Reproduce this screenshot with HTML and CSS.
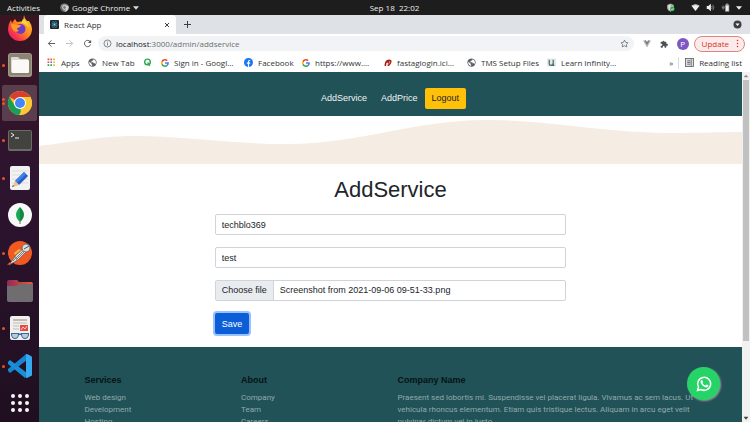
FILE: index.html
```html
<!DOCTYPE html>
<html lang="en">
<head>
<meta charset="utf-8">
<meta name="viewport" content="width=device-width, initial-scale=1">
<title>React App</title>
<link rel="stylesheet" href="styles.css">
</head>
<body>
<svg class="defs" aria-hidden="true">
  <symbol id="globe" viewBox="0 0 24 24">
    <circle cx="12" cy="12" r="11" fill="#5f6368"/>
    <path d="M3 10l6 4v2l2 2v3C6 21 3 16 3 10zM9 3l6 0-1 3-3 1v2H8v2h6l1 3h3l2 2c3-4 1-11-5-13z" fill="#fff"/>
  </symbol>
  <symbol id="google" viewBox="0 0 48 48">
    <path fill="#ea4335" d="M24 9.5c3.5 0 6.700 1.200 9.200 3.600l6.900-6.900C35.900 2.400 30.500 0 24 0 14.600 0 6.500 5.400 2.600 13.200l8 6.200C12.400 13.700 17.700 9.500 24 9.500z"/>
    <path fill="#4285f4" d="M47 24.600c0-1.600-.2-3.100-.4-4.600H24v9h12.900c-.6 3-2.200 5.500-4.700 7.200l7.700 6C44.400 38 47 32 47 24.600z"/>
    <path fill="#fbbc05" d="M10.500 28.600a14.500 14.500 0 0 1 0-9.200l-8-6.200a24 24 0 0 0 0 21.600z"/>
    <path fill="#34a853" d="M24 48c6.500 0 12-2.100 15.900-5.800l-7.700-6c-2.200 1.500-4.900 2.300-8.200 2.300-6.300 0-11.600-4.200-13.500-9.900l-8 6.200C6.500 42.600 14.600 48 24 48z"/>
  </symbol>
</svg>

<header class="topbar">
  <div class="topbar-left">
    <button>Activities</button>
    <button class="app-menu">
      <svg class="i9" viewBox="0 0 24 24"><circle cx="12" cy="12" r="11" fill="#8b8b8b"/><path d="M12 7h10A11 11 0 0 1 12 23l5-8" fill="#d2d2d2"/><path d="M7 15L2 7a11 11 0 0 0 9 16" fill="#666"/><circle cx="12" cy="12" r="5" fill="#777" stroke="#eee" stroke-width="2"/></svg>
      Google Chrome
      <svg class="i6" viewBox="0 0 10 10"><path d="M0 2h10L5 8z" fill="#ddd"/></svg>
    </button>
  </div>
  <time>Sep 18&nbsp; 22:02</time>
  <div class="tray">
    <svg class="i9 shield" viewBox="0 0 24 24"><path d="M12 1l9 4v7c0 6-4 9-9 11-5-2-9-5-9-11V5z" fill="#aaa"/><path d="M12 4v16c-4-2-6-4-6-8V6z" fill="#ddd"/><circle cx="17" cy="16" r="6" fill="#25b543"/><path d="M14 16l2 2 4-4" stroke="#fff" stroke-width="2" fill="none"/></svg>
    <svg class="i9" viewBox="0 0 24 24"><path d="M1 7q11-8 22 0L12 21z" fill="#eee"/><path d="M3 8q9-6 18 0" stroke="#888" fill="none"/></svg>
    <svg class="i9" viewBox="0 0 24 24"><path d="M2 8h4l7-6v20l-7-6H2z" fill="#eee"/><path d="M15 8q3 4 0 8M18 5q6 7 0 14" stroke="#999" stroke-width="2" fill="none"/></svg>
    <svg class="i9" viewBox="0 0 24 24"><path d="M11 4h3V1h5v3h3v19H11z" fill="#999"/><path d="M13 7h7v14h-7z" fill="#eee"/><path d="M6 6v4M3 10h6v4H3zM6 14v5" stroke="#777" stroke-width="2" fill="#777"/></svg>
    <svg class="i6" viewBox="0 0 10 10"><path d="M0 2h10L5 8z" fill="#eee"/></svg>
  </div>
</header>

<div class="desktop">
  <nav class="dock" aria-label="Dock">
    <button class="dock-item" aria-label="Firefox">
      <svg viewBox="0 0 26 26"><defs><linearGradient id="fx" x1="1" y1="0" x2="0" y2="1"><stop offset="0" stop-color="#ffe23a"/><stop offset=".45" stop-color="#ff8a1f"/><stop offset=".75" stop-color="#f8334d"/><stop offset="1" stop-color="#d9128c"/></linearGradient></defs><path d="M17 0q0 3 3 6l2 0q3 4 3 8a12 12 0 0 1-24 0Q1 9 4 5l1 3 3-4 2 3q4-1 6 0z" fill="url(#fx)"/><circle cx="13.500" cy="14" r="5" fill="#6c3bc9"/><path d="M4 9q4 0 6 1h4q-1 3-4 3 0 2 2 3-4 2-6-1-2-3-2-6z" fill="#ff9a22"/><path d="M16 4q5 3 6 9-4-5-8-5z" fill="#ffd33b"/></svg>
    </button>
    <button class="dock-item running" aria-label="Files">
      <svg viewBox="0 0 26 26"><rect x="1" y="1" width="24" height="24" rx="3" fill="#a09a88"/><rect x="2" y="2" width="22" height="21" rx="2" fill="#8b8473"/><path d="M4 6q0-1 1-1h6l2 2h8v13q0 1-1 1H6q-2 0-2-2z" fill="#ddd8cf"/><rect x="5" y="8" width="17" height="13" rx="1" fill="#faf9f7"/></svg>
    </button>
    <button class="dock-item running twice active" aria-label="Google Chrome">
      <svg viewBox="0 0 26 26"><circle cx="13" cy="13" r="12" fill="#fcc934"/><path d="M13 13L2.600 7a12 12 0 0 1 20.800 0z" fill="#d93f30"/><path d="M13 13l1 12A12 12 0 0 1 2.600 7L8 16z" fill="#1e9e55"/><path d="M18 15l-6 10h2a12 12 0 0 0 9.400-18H13z" fill="#fcc934"/><circle cx="13" cy="13" r="6" fill="#fff"/><circle cx="13" cy="13" r="5" fill="#4386f5"/></svg>
    </button>
    <button class="dock-item running" aria-label="Terminal">
      <svg viewBox="0 0 26 26"><rect x="1" y="3" width="24" height="21" rx="2" fill="#6a6a66"/><rect x="2" y="4" width="22" height="18" rx="1" fill="#42423f"/><path d="M4 6l3 2-3 2M8 11h4" stroke="#eee" fill="none"/></svg>
    </button>
    <button class="dock-item running" aria-label="Text Editor">
      <svg viewBox="0 0 26 26"><rect x="3" y="1" width="20" height="24" rx="2" fill="#f2f2f2"/><path d="M5 6h16M5 10h16M5 14h16M5 18h16" stroke="#ddd"/><path d="M17 7l4 4-9 9-4-4z" fill="#245dcc"/><path d="M17 7l2 2-9 9-2-2z" fill="#4582e8"/><path d="M8 16l4 4-6 2z" fill="#efc28c"/><path d="M6 20l1 1-2 1z" fill="#222"/></svg>
    </button>
    <button class="dock-item" aria-label="MongoDB Compass">
      <svg viewBox="0 0 26 26"><circle cx="13" cy="13" r="12" fill="#f8f8f8"/><path d="M13 5q-8 8 0 15z" fill="#17a851"/><path d="M13 5q8 8 0 15z" fill="#118743"/><path d="M13 18v4" stroke="#777"/></svg>
    </button>
    <button class="dock-item running" aria-label="Postman">
      <svg viewBox="0 0 26 26"><circle cx="13" cy="13" r="12" fill="#f05a22"/><path d="M2 25l7-10 8-7 3 3-9 9z" fill="#e6ded6" stroke="#555" stroke-width=".7"/><path d="M6 21L17 10M9 20l9-9M7 16l4 3" stroke="#666" stroke-width=".8"/><circle cx="19" cy="8" r="4" fill="#ddd" stroke="#555" stroke-width=".7"/><path d="M17 9l5-3" stroke="#555"/><path d="M7 13l5-4 2 1-6 5z" fill="#f7b33f"/><path d="M0 25l3-3 1 2z" fill="#ff5c2e"/></svg>
    </button>
    <button class="dock-item" aria-label="Folder">
      <svg viewBox="0 0 26 26"><defs><linearGradient id="fd"><stop offset="0" stop-color="#8e2959"/><stop offset="1" stop-color="#eb5d35"/></linearGradient></defs><path d="M0 4q0-2 2-2h8l2 2h12q2 0 2 2v6H0z" fill="url(#fd)"/><path d="M0 8h10l2-2h14v16q0 2-2 2H2q-2 0-2-2z" fill="#6f6d6f"/></svg>
    </button>
    <button class="dock-item running" aria-label="Document Viewer">
      <svg viewBox="0 0 26 26"><rect x="3" y="1" width="20" height="24" rx="2" fill="#f2f0ed"/><path d="M6 5h14" stroke="#888"/><path d="M6 8h14M6 11h6M6 14h6" stroke="#bbb"/><rect x="13" y="10" width="8" height="6" fill="#e14b44"/><path d="M14 15l2-3 2 2 2-3" stroke="#fff" stroke-width=".7" fill="none"/><path d="M4 18h8l1 1 1-1h8v2q-1 4-4 4t-4-4h-2q-1 4-4 4t-4-4z" fill="#2f69a8"/><path d="M5 19h6q0 4-3 4t-3-4zM15 19h6q0 4-3 4t-3-4z" fill="#bdcbd7"/></svg>
    </button>
    <button class="dock-item running" aria-label="Visual Studio Code">
      <svg viewBox="0 0 26 26"><path d="M18 2L1 16v2l2 2L20 7z" fill="#1684d0"/><path d="M1 9l2-2 17 13-2 5L1 11z" fill="#198ed9"/><path d="M18 2q1-1 2-1l4 2q1 0 1 2v17q0 1-1 1l-4 2q-1 0-2-1 1 0 1-2V4z" fill="#35a9ef"/></svg>
    </button>
    <button class="dock-item" aria-label="Show Applications">
      <svg viewBox="0 0 26 26" fill="#f5f5f5"><circle cx="6" cy="6" r="2"/><circle cx="13" cy="6" r="2"/><circle cx="20" cy="6" r="2"/><circle cx="6" cy="13" r="2"/><circle cx="13" cy="13" r="2"/><circle cx="20" cy="13" r="2"/><circle cx="6" cy="20" r="2"/><circle cx="13" cy="20" r="2"/><circle cx="20" cy="20" r="2"/></svg>
    </button>
  </nav>

  <div class="window">
    <div class="tabstrip">
      <div class="tab">
        <svg class="i9" viewBox="0 0 20 20"><rect width="20" height="20" rx="2" fill="#20232a"/><g fill="none" stroke="#48a0b5"><ellipse cx="10" cy="10" rx="8" ry="3"/><ellipse cx="10" cy="10" rx="8" ry="3" transform="rotate(60 10 10)"/><ellipse cx="10" cy="10" rx="8" ry="3" transform="rotate(120 10 10)"/></g><circle cx="10" cy="10" r="2" fill="#61dafb"/></svg>
        <span class="tab-title">React App</span>
        <button class="icon-btn" aria-label="Close tab"><svg class="i6" viewBox="0 0 12 12"><path d="M2 2l8 8M10 2l-8 8" stroke="#3c4043" stroke-width="2"/></svg></button>
      </div>
      <button class="icon-btn" aria-label="New tab"><svg class="i9" viewBox="0 0 18 18"><path d="M9 2v14M2 9h14" stroke="#3c4043" stroke-width="2"/></svg></button>
      <button class="icon-btn tab-search" aria-label="Search tabs"><svg class="i9" viewBox="0 0 18 18"><circle cx="9" cy="9" r="8" fill="#3c4043"/><path d="M5 7h8l-4 5z" fill="#fff"/></svg></button>
    </div>

    <div class="toolbar">
      <button class="icon-btn" aria-label="Back"><svg class="i9" viewBox="0 0 20 20"><path d="M18 10H3M10 3l-7 7 7 7" stroke="#4d5156" stroke-width="2" fill="none"/></svg></button>
      <button class="icon-btn" aria-label="Forward"><svg class="i9" viewBox="0 0 20 20"><path d="M2 10h15M10 3l7 7-7 7" stroke="#babcbe" stroke-width="2" fill="none"/></svg></button>
      <button class="icon-btn" aria-label="Reload"><svg class="i9" viewBox="0 0 20 20"><path d="M16 6a7 7 0 1 0 1 6" stroke="#4d5156" stroke-width="2" fill="none"/><path d="M18 2v7h-7z" fill="#4d5156"/></svg></button>
      <div class="omnibox">
        <svg class="i9" viewBox="0 0 18 18"><circle cx="9" cy="9" r="7" fill="none" stroke="#5f6368" stroke-width="1.500"/><path d="M9 8v5M9 5v2" stroke="#5f6368" stroke-width="1.500"/></svg>
        <a class="url" href="#"><b>localhost</b>:3000/admin/addservice</a>
        <button class="icon-btn" aria-label="Bookmark this page"><svg class="i9" viewBox="0 0 24 24"><path d="M12 3l3 6 6 1-4 5 1 6-6-3-6 3 1-6-4-5 6-1z" fill="none" stroke="#5f6368" stroke-width="2"/></svg></button>
      </div>
      <button class="icon-btn" aria-label="Vue devtools"><svg class="i8" viewBox="0 0 16 16"><path d="M0 1h6l2 4 2-4h6L8 15z" fill="#b4b4b4"/><path d="M3 1h3l2 4 2-4h3L8 10z" fill="#777"/></svg></button>
      <button class="icon-btn" aria-label="Extensions"><svg class="i8" viewBox="0 0 24 24"><path d="M21 11h-2V7q0-2-2-2h-4V4a3 3 0 0 0-5 0v1H4Q2 5 2 7v4h2a3 3 0 0 1 0 6H2v4q0 2 2 2h4v-2a3 3 0 0 1 6 0v2h3q2 0 2-2v-4h2a3 3 0 0 0 0-6z" fill="#4d5156"/></svg></button>
      <button class="avatar" aria-label="Profile">P</button>
      <button class="update">Update <svg class="i9" viewBox="0 0 18 18" fill="#d93025"><circle cx="9" cy="3" r="1.500"/><circle cx="9" cy="9" r="1.500"/><circle cx="9" cy="15" r="1.500"/></svg></button>
    </div>

    <div class="bookmarks">
      <div class="bookmark-list">
        <a href="#"><svg class="i9" viewBox="0 0 16 16"><path d="M1 1h3v3H1zM1 6h3v3H1z" fill="#e8473c"/><path d="M6 1h3v3H6z" fill="#e8473c"/><path d="M11 1h3v3h-3z" fill="#f5a623"/><path d="M1 11h3v3H1zM6 11h3v3H6z" fill="#2fa457"/><path d="M6 6h3v3H6z" fill="#4285f4"/><path d="M11 6h3v3h-3zM11 11h3v3h-3z" fill="#f9b916"/></svg>Apps</a>
        <a href="#"><svg class="i9"><use href="#globe"/></svg>New Tab</a>
        <a href="#" aria-label="Saved page"><svg class="i9" viewBox="0 0 16 16"><circle cx="8" cy="7" r="5" fill="none" stroke="#2da94f" stroke-width="2.500"/><path d="M8 7l3 2 2 6-5-3z" fill="#2da94f"/></svg></a>
        <a href="#"><svg class="i8"><use href="#google"/></svg>Sign in - Googl…</a>
        <a href="#"><svg class="i9" viewBox="0 0 16 16"><circle cx="8" cy="8" r="8" fill="#1877f2"/><path d="M7 16v-6H5V8h2V6q0-3 4-3v2Q9 5 9 6v2h2v2H9v6z" fill="#fff"/></svg>Facebook</a>
        <a href="#"><svg class="i8"><use href="#google"/></svg>https://www.…</a>
        <a href="#"><svg class="i8" viewBox="0 0 16 16"><path d="M6 2q6-2 9 1 1 5-5 11H7l1-7-3 1-1 6H1Q1 5 6 2z" fill="#a61f1a"/><path d="M11 4h2l-3 7H8z" fill="#f0917a"/></svg>fastaglogin.ici…</a>
        <a href="#"><svg class="i9"><use href="#globe"/></svg>TMS Setup Files</a>
        <a href="#"><svg class="i9" viewBox="0 0 16 16"><path d="M0 1h16v14H0z" fill="#dceae8"/><path d="M4 3v7q0 3 3 3 4 0 4-4V3v10h2" stroke="#43615f" stroke-width="2" fill="none"/></svg>Learn Infinity…</a>
      </div>
      <button class="more" aria-label="More bookmarks">»</button>
      <button class="reading"><svg class="i9" viewBox="0 0 16 16"><rect x="1" y="1" width="14" height="14" fill="#ddd" stroke="#5f6368" stroke-width="1.500"/><path d="M4 5h5M4 8h5M4 11h5M11 2v12" stroke="#5f6368" stroke-width="1.500"/></svg>Reading list</button>
    </div>

    <div class="viewport">
      <div class="page">
        <nav class="site-nav">
          <a href="#">AddService</a>
          <a href="#">AddPrice</a>
          <button class="btn btn-warning">Logout</button>
        </nav>
        <svg class="wave" viewBox="0 0 702 48" preserveAspectRatio="none" aria-hidden="true"><path d="M0 30C40 25 65 20 95 20C140 20 195 28 247 28C320 28 375 4 447 4C510 4 565 17 633 17C660 17 680 16 702 16V48H0Z" fill="#f5ece3"/></svg>
        <form class="service-form">
          <h1>AddService</h1>
          <input class="control" type="text" aria-label="Name" value="techblo369">
          <input class="control" type="text" aria-label="Description" value="test">
          <label class="control file">
            <input type="file">
            <span class="file-button">Choose file</span>
            <span class="file-name">Screenshot from 2021-09-06 09-51-33.png</span>
          </label>
          <button class="btn btn-primary" type="button">Save</button>
        </form>
        <footer class="footer">
          <div class="footer-grid">
            <section>
              <h2>Services</h2>
              <ul><li><a href="#">Web design</a></li><li><a href="#">Development</a></li><li><a href="#">Hosting</a></li></ul>
            </section>
            <section>
              <h2>About</h2>
              <ul><li><a href="#">Company</a></li><li><a href="#">Team</a></li><li><a href="#">Careers</a></li></ul>
            </section>
            <section>
              <h2>Company Name</h2>
              <p>Praesent sed lobortis mi. Suspendisse vel placerat ligula. Vivamus ac sem lacus. Ut vehicula rhoncus elementum. Etiam quis tristique lectus. Aliquam in arcu eget velit pulvinar dictum vel in justo.</p>
            </section>
          </div>
        </footer>
        <a class="whatsapp" href="#" aria-label="WhatsApp"><svg viewBox="0 0 32 32"><path d="M3 29l2-7a13 13 0 1 1 5 5z" fill="none" stroke="#fff" stroke-width="3"/><path d="M10 9q2-2 3 0l1 3q0 1-1 2 2 4 6 5l2-2q2 0 4 2 0 3-4 4-4 0-8-4-5-5-4-8z" fill="#fff"/></svg></a>
      </div>
      <div class="scrollbar" aria-hidden="true">
        <svg class="i6" viewBox="0 0 10 10"><path d="M1 7h8L5 3z" fill="#8a8a8a"/></svg>
        <div class="thumb"></div>
        <svg class="i6" viewBox="0 0 10 10"><path d="M1 3h8L5 8z" fill="#444"/></svg>
      </div>
    </div>
  </div>
</div>
</body>
</html>
```
FILE: styles.css
```css
* { box-sizing: border-box; }

body {
  margin: 0;
  height: 100vh;
  display: flex;
  flex-direction: column;
  overflow: hidden;
  font-family: "Open Sans", "Noto Sans", sans-serif;
  font-size: 8px;
  line-height: 12px;
  color: #303336;
}

button, input { font: inherit; color: inherit; }
button { border: 0; padding: 0; background: none; }
a { color: inherit; text-decoration: none; }
svg { display: block; flex: none; }

.defs { position: absolute; width: 0; height: 0; }
.i6 { width: 6px; height: 6px; }
.i8 { width: 8px; height: 8px; }
.i9 { width: 9px; height: 9px; }
.icon-btn { display: flex; align-items: center; }

/* System bar */
.topbar {
  position: relative;
  z-index: 2;
  flex: none;
  height: 15px;
  padding: 0 8px 0 7px;
  display: grid;
  grid-template-columns: 1fr auto 1fr;
  align-items: center;
  background: #1d1d1d;
  color: #eee;
}
.topbar-left { display: flex; gap: 20px; }
.app-menu { display: flex; align-items: center; gap: 3px; }
.topbar time { padding-left: 40px; }
.tray { display: flex; align-items: center; justify-content: flex-end; gap: 6px; }
.shield { margin-right: 10px; }

.desktop { flex: 1; min-height: 0; display: flex; }

/* Dock */
.dock {
  flex: none;
  width: 39px;
  margin-top: -6px;
  display: grid;
  grid-auto-rows: 1fr;
  background: linear-gradient(#3a1520, #2e1430 40%, #1f0f20);
}
.dock-item {
  position: relative;
  display: flex;
  align-items: center;
  justify-content: center;
  margin: 1px 2px;
  border-radius: 2px;
}
.dock-item svg { width: 26px; height: 26px; }
.dock-item.active { background: #5b3e4e; }
.dock-item.running::before {
  content: "";
  position: absolute;
  left: 0;
  top: calc(50% - 1px);
  width: 3px;
  height: 3px;
  border-radius: 50%;
  background: #e95420;
}
.dock-item.twice::before { box-shadow: 0 -4px #e95420; }

/* Browser window */
.window { flex: 1; min-width: 0; display: flex; flex-direction: column; background: #fff; }
.tabstrip {
  flex: none;
  height: 19px;
  padding: 0 8px 0 5px;
  display: flex;
  align-items: center;
  gap: 7px;
  background: #dee1e6;
}
.tab {
  width: 132px;
  height: 19px;
  padding: 0 6px;
  display: flex;
  align-items: center;
  gap: 5px;
  background: #fff;
  border-radius: 4px 4px 0 0;
}
.tab-title { flex: 1; }
.tab-search { margin-left: auto; }

.toolbar {
  flex: none;
  height: 19px;
  padding: 0 5px 0 8px;
  display: flex;
  align-items: center;
  gap: 9px;
}
.omnibox {
  flex: 1;
  height: 15px;
  margin-left: -3px;
  padding: 0 5px;
  display: flex;
  align-items: center;
  gap: 4px;
  border-radius: 8px;
  background: #f1f3f4;
}
.url { flex: 1; color: #6b6f73; }
.url b { font-weight: 400; color: #202124; }
.avatar {
  width: 12px;
  height: 12px;
  border-radius: 50%;
  background: #7e57c2;
  color: #fff;
}
.update {
  height: 16px;
  margin-left: -4px;
  padding: 0 2px 0 7px;
  display: flex;
  align-items: center;
  gap: 4px;
  border: 1px solid #dd8580;
  border-radius: 8px;
  background: #fcebea;
  color: #d93025;
}

.bookmarks {
  flex: none;
  height: 19px;
  padding: 0 8px;
  display: flex;
  align-items: center;
}
.bookmark-list {
  flex: 1;
  display: grid;
  grid-template-columns: 41px 55px 18px 83px 58px 82px 83px 80px 1fr;
  white-space: nowrap;
}
.bookmark-list a, .reading { display: flex; align-items: center; gap: 5px; }
.more { padding-right: 5px; }
.reading { padding-left: 6px; border-left: 1px solid #dadce0; }

.viewport { flex: 1; min-height: 0; display: flex; }

/* Page */
.page {
  position: relative;
  flex: 1;
  overflow: hidden;
  font-family: "Liberation Sans", Arial, sans-serif;
  font-size: 9px;
  color: #212529;
}
.site-nav {
  height: 44px;
  padding: 8px 0 0 6px;
  display: flex;
  align-items: center;
  justify-content: center;
  gap: 14px;
  background: #205257;
  color: #f2f5f5;
}
.site-nav .btn { margin-left: -7px; }
.btn { height: 21px; padding: 0 7px; border-radius: 2px; }
.btn-warning { background: #ffc107; color: #212529; }
.btn-primary {
  background: #0b5ed7;
  color: #fff;
  box-shadow: 0 0 0 2px #98c1fe;
}
.wave { width: 100%; height: 48px; }

.service-form {
  width: 50%;
  margin: 0 auto;
  padding: 13px 0 13px;
  display: flex;
  flex-direction: column;
  align-items: flex-start;
  gap: 12px;
}
h1 {
  margin: 0 0 -1px;
  align-self: center;
  font-size: 22px;
  line-height: 26px;
  font-weight: 400;
}
.control {
  width: 100%;
  height: 21px;
  padding: 0 6px;
  border: 1px solid #ced4da;
  border-radius: 2px;
  background: #fff;
}
.file {
  position: relative;
  display: flex;
  padding: 0;
  line-height: 19px;
  overflow: hidden;
}
.file input { position: absolute; width: 1px; height: 1px; opacity: 0; }
.file-button { padding: 0 6px; background: #e9ecef; border-right: 1px solid #ced4da; }
.file-name { padding: 0 6px; }

.footer { min-height: 160px; padding-top: 26px; background: #205257; }
.footer-grid {
  max-width: 626px;
  margin: 0 auto;
  display: grid;
  grid-template-columns: 1fr 1fr 2fr;
}
.footer section { padding: 0 7px; }
.footer h2 { margin: 0 0 5px; font-size: 9px; line-height: 14px; color: #061314; }
.footer ul, .footer p {
  margin: 0;
  padding: 0;
  list-style: none;
  font-family: Roboto, "Liberation Sans", sans-serif;
  font-size: 8px;
  color: #91aaac;
}

.whatsapp {
  position: absolute;
  right: 22px;
  bottom: 22px;
  width: 33px;
  height: 33px;
  display: flex;
  align-items: center;
  justify-content: center;
  border-radius: 50%;
  background: #25d366;
  box-shadow: 1px 1px 2px #999;
}
.whatsapp svg { width: 16px; height: 16px; }

.scrollbar {
  flex: none;
  width: 8px;
  padding: 1px 0;
  display: flex;
  flex-direction: column;
  align-items: center;
  background: #f1f1f1;
}
.thumb { width: 6px; height: 261px; margin: 1px 0 auto; background: #c1c1c1; }
```
